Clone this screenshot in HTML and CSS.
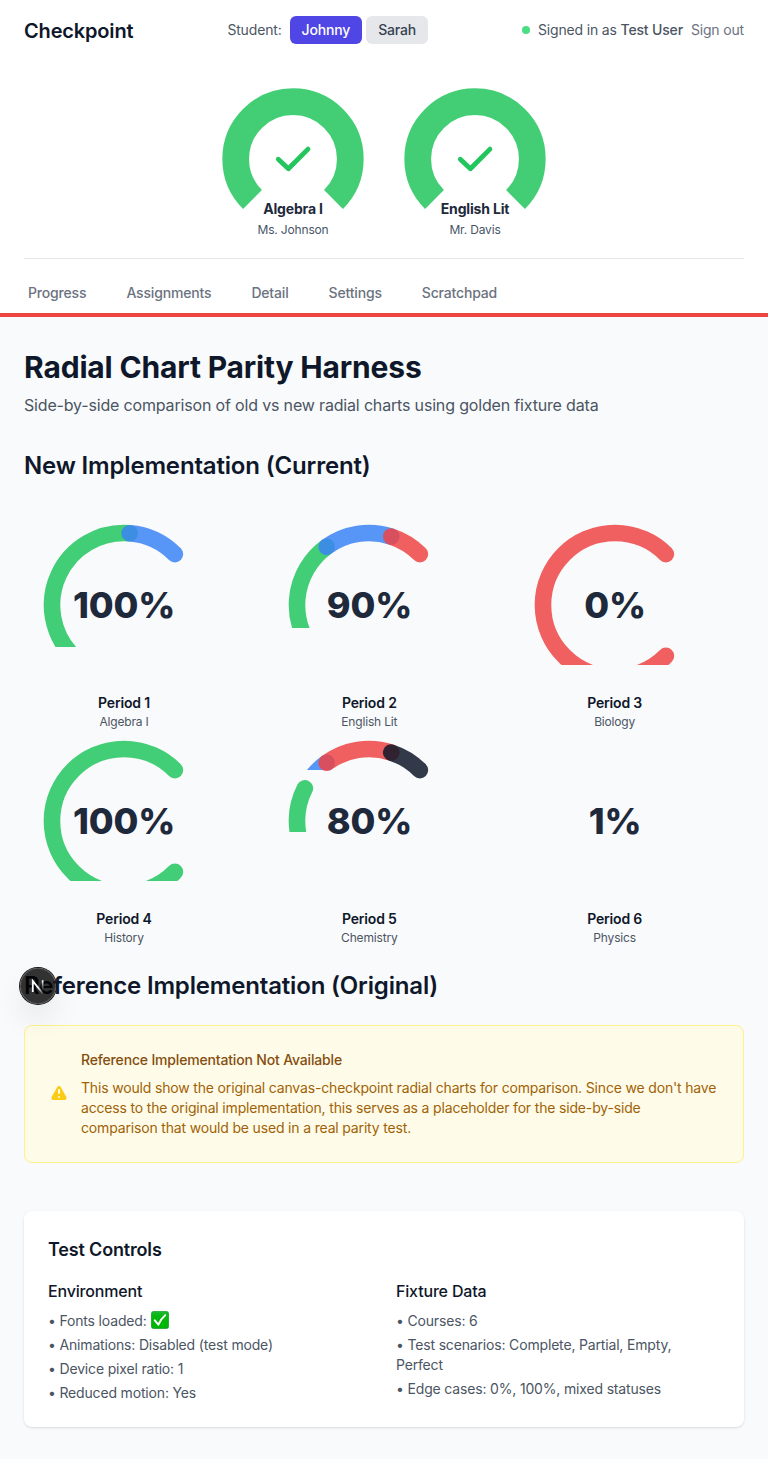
FILE: index.html
```html
<!DOCTYPE html>
<html lang="en">
<head>
<meta charset="utf-8">
<title>Checkpoint</title>
<link rel="stylesheet" href="styles.css">
</head>
<body>
<header class="header">
  <div class="topbar">
    <div class="brand">Checkpoint</div>
    <div class="students"><span class="label">Student:</span><button class="pill active">Johnny</button><button class="pill">Sarah</button></div>
    <div class="account"><span class="dot"></span><span>Signed in as <b>Test User</b></span><a class="signout">Sign out</a></div>
  </div>
  <div class="summary">
    <svg class="donut" viewBox="-71 -79 142 162">
      <path class="ring green" d="M-40.5 40.5A57.3 57.3 0 1 1 40.5 40.5"/>
      <path class="check" d="M-14.7 .2L-4.6 9.8L15 -9.9"/>
      <text class="course" y="55">Algebra I</text>
      <text class="teacher" y="75">Ms. Johnson</text>
    </svg>
    <svg class="donut" viewBox="-71 -79 142 162">
      <path class="ring green" d="M-40.5 40.5A57.3 57.3 0 1 1 40.5 40.5"/>
      <path class="check" d="M-14.7 .2L-4.6 9.8L15 -9.9"/>
      <text class="course" y="55">English Lit</text>
      <text class="teacher" y="75">Mr. Davis</text>
    </svg>
  </div>
  <nav class="nav"><a>Progress</a><a>Assignments</a><a>Detail</a><a>Settings</a><a>Scratchpad</a></nav>
</header>
<main class="main">
  <h1>Radial Chart Parity Harness</h1>
  <p class="lead">Side-by-side comparison of old vs new radial charts using golden fixture data</p>
  <h2>New Implementation (Current)</h2>
  <div class="charts">
    <div class="chart">
      <svg viewBox="-100 -84 200 168">
        <clipPath id="c1"><rect x="-100" y="-100" width="200" height="142"/></clipPath>
        <path class="arc green" clip-path="url(#c1)" d="M-50.9 50.9A72 72 0 0 1 5.65 -71.78"/>
        <path class="arc blue" d="M5.65 -71.78A72 72 0 0 1 50.9 -50.9"/>
        <text class="value" y="13">100%</text>
      </svg>
      <div class="name">Period 1</div><div class="subject">Algebra I</div>
    </div>
    <div class="chart">
      <svg viewBox="-100 -84 200 168">
        <clipPath id="c2"><rect x="-100" y="-100" width="200" height="123"/></clipPath>
        <path class="arc green" clip-path="url(#c2)" d="M-50.9 50.9A72 72 0 0 1 -42.32 -58.25"/>
        <path class="arc blue" d="M-42.32 -58.25A72 72 0 0 1 22.25 -68.48"/>
        <path class="arc red" d="M22.25 -68.48A72 72 0 0 1 50.9 -50.9"/>
        <text class="value" x=".4" y="13">90%</text>
      </svg>
      <div class="name">Period 2</div><div class="subject">English Lit</div>
    </div>
    <div class="chart">
      <svg viewBox="-100 -84 200 168">
        <clipPath id="c3"><rect x="-100" y="-100" width="200" height="160"/></clipPath>
        <path class="arc red" clip-path="url(#c3)" d="M50.9 50.9A72 72 0 1 1 50.9 -50.9"/>
        <text class="value" y="13">0%</text>
      </svg>
      <div class="name">Period 3</div><div class="subject">Biology</div>
    </div>
    <div class="chart">
      <svg viewBox="-100 -84 200 168">
        <path class="arc green" clip-path="url(#c3)" d="M50.9 50.9A72 72 0 1 1 50.9 -50.9"/>
        <text class="value" y="13">100%</text>
      </svg>
      <div class="name">Period 4</div><div class="subject">History</div>
    </div>
    <div class="chart">
      <svg viewBox="-100 -84 200 168">
        <clipPath id="c5"><rect x="-100" y="-100" width="200" height="111"/></clipPath>
        <clipPath id="c6"><rect x="-100" y="-100" width="200" height="49"/></clipPath>
        <path class="arc green" clip-path="url(#c5)" d="M-50.9 50.9A72 72 0 0 1 -64.15 -32.69"/>
        <path class="arc blue" clip-path="url(#c6)" d="M-64.15 -32.69A72 72 0 0 1 -42.32 -58.25"/>
        <path class="arc red" d="M-42.32 -58.25A72 72 0 0 1 22.25 -68.48"/>
        <path class="arc dark" d="M22.25 -68.48A72 72 0 0 1 50.9 -50.9"/>
        <text class="value" x=".4" y="13">80%</text>
      </svg>
      <div class="name">Period 5</div><div class="subject">Chemistry</div>
    </div>
    <div class="chart">
      <svg viewBox="-100 -84 200 168"><text class="value" y="13">1%</text></svg>
      <div class="name">Period 6</div><div class="subject">Physics</div>
    </div>
  </div>
  <div class="ref-heading">
    <h2>Reference Implementation (Original)</h2>
    <div class="badge">
      <svg viewBox="0 0 38 38">
        <defs>
          <linearGradient id="g1" gradientUnits="userSpaceOnUse" x1="20" y1="20" x2="25" y2="27"><stop stop-color="#fff"/><stop offset="1" stop-color="#fff" stop-opacity="0"/></linearGradient>
          <linearGradient id="g2" x1="0" y1="0" x2="0" y2="1"><stop stop-color="#fff"/><stop offset="1" stop-color="#fff" stop-opacity="0"/></linearGradient>
        </defs>
        <path d="M13.8 25V14L24 26.8" fill="none" stroke="url(#g1)" stroke-width="1.8"/>
        <rect x="22.8" y="13.2" width="1.7" height="11" fill="url(#g2)"/>
      </svg>
    </div>
  </div>
  <section class="notice">
    <svg viewBox="0 0 20 20"><path fill="#facc15" fill-rule="evenodd" d="M8.257 3.099c.765-1.36 2.722-1.36 3.486 0l5.58 9.92c.75 1.334-.213 2.98-1.742 2.98H4.42c-1.53 0-2.493-1.646-1.743-2.98l5.58-9.92zM11 13a1 1 0 11-2 0 1 1 0 012 0zm-1-8a1 1 0 00-1 1v3a1 1 0 002 0V6a1 1 0 00-1-1z" clip-rule="evenodd"/></svg>
    <div>
      <h3>Reference Implementation Not Available</h3>
      <p>This would show the original canvas-checkpoint radial charts for comparison. Since we don't have access to the original implementation, this serves as a placeholder for the side-by-side comparison that would be used in a real parity test.</p>
    </div>
  </section>
  <section class="controls">
    <h3>Test Controls</h3>
    <div class="columns">
      <div>
        <h4>Environment</h4>
        <ul>
          <li>• Fonts loaded: <svg class="tick" viewBox="0 0 18 18"><defs><linearGradient id="g3" x1="0" y1="0" x2="0" y2="1"><stop stop-color="#20b838"/><stop offset=".25" stop-color="#05b90f"/><stop offset="1" stop-color="#00b500"/></linearGradient></defs><rect x=".4" y=".4" width="17.2" height="17.2" rx="2.5" fill="url(#g3)" stroke="#149b24" stroke-width=".8"/><path d="M3.8 9.3L7.4 13.7Q9.5 8.2 14.2 4.2" fill="none" stroke="#fff" stroke-width="1.9" stroke-linecap="round" stroke-linejoin="round"/></svg></li>
          <li>• Animations: Disabled (test mode)</li>
          <li>• Device pixel ratio: 1</li>
          <li>• Reduced motion: Yes</li>
        </ul>
      </div>
      <div>
        <h4>Fixture Data</h4>
        <ul>
          <li>• Courses: 6</li>
          <li>• Test scenarios: Complete, Partial, Empty, Perfect</li>
          <li>• Edge cases: 0%, 100%, mixed statuses</li>
        </ul>
      </div>
    </div>
  </section>
</main>
</body>
</html>
```
FILE: styles.css
```css
* { box-sizing: border-box; margin: 0; padding: 0; }
body { font-family: Inter, sans-serif; font-size: 14px; line-height: 20px; letter-spacing: -.168px; background: #f9fafb; color: #0f172a; }
svg { display: block; }
.header { background: #fff; height: 317px; border-bottom: 4px solid #ef4444; padding: 16px 24px 0; }
.topbar { display: flex; justify-content: space-between; align-items: center; height: 28px; }
.brand { font-size: 20px; line-height: 28px; font-weight: 600; padding-top: 2px; }
.students { display: flex; align-items: center; gap: 4px; }
.label { color: #4b5563; margin-right: 4px; }
.pill { font: 500 14px/20px Inter, sans-serif; letter-spacing: inherit; border: 0; border-radius: 6px; padding: 4px 12px; background: #e5e7eb; color: #374151; }
.pill.active { background: #4f46e5; color: #fff; }
.account { display: flex; align-items: center; gap: 8px; color: #4b5563; }
.account b { font-weight: 500; }
.dot { width: 8px; height: 8px; border-radius: 50%; background: #4ade80; }
.signout { color: #6b7280; }
.summary { display: flex; justify-content: center; gap: 40px; padding: 36px 0 16px; }
.donut { width: 142px; height: 162px; }
.ring { fill: none; stroke-width: 26.7; opacity: .85; }
.check { fill: none; stroke: #22c55e; stroke-width: 4.8; stroke-linecap: round; stroke-linejoin: round; }
text { text-anchor: middle; }
.course { font-size: 14px; font-weight: 700; fill: #1e293b; }
.teacher { font-size: 12px; fill: #475569; }
.nav { display: flex; gap: 40px; border-top: 1px solid #e5e7eb; padding: 24px 4px 0; font-weight: 500; color: #6b7280; }
.main { padding: 32px 24px; }
h1 { font-size: 30px; line-height: 36px; font-weight: 700; }
.lead { font-size: 16px; line-height: 24px; color: #4b5563; margin: 8px 0 32px; }
h2 { font-size: 24px; line-height: 32px; font-weight: 600; padding-top: 1px; }
.charts { display: grid; grid-template-columns: repeat(3, 1fr); gap: 7px 16px; padding: 39px 0 23px; }
.chart { width: 200px; text-align: center; }
.chart svg { width: 200px; height: 168px; margin-bottom: 4px; }
.arc { fill: none; stroke-width: 16.6; stroke-linecap: round; opacity: .85; }
.green { stroke: #22c55e; }
.blue { stroke: #3b82f6; }
.red { stroke: #ef4444; }
.dark { stroke: #0f172a; }
.value { font-size: 36px; font-weight: 800; fill: #1e293b; }
.name { font-weight: 600; }
.subject { font-size: 12px; line-height: 16px; padding-top: 1px; color: #4b5563; }
.ref-heading { position: relative; }
.badge { position: absolute; left: -4px; top: -1px; width: 36px; height: 36px; border-radius: 50%; background: rgba(0,0,0,.8); box-shadow: 0 0 0 1px #171717, inset 0 0 0 1px rgba(255,255,255,.14), 0 16px 32px -8px rgba(0,0,0,.24); }
.badge svg { width: 38px; height: 38px; margin: -1px; }
.notice { display: flex; align-items: center; gap: 12px; margin: 23px 0 48px; padding: 24px; border: 1px solid #fef08a; border-radius: 8px; background: #fefce8; color: #a16207; }
.notice svg { width: 20px; height: 20px; flex: none; }
.notice h3 { font-size: 14px; font-weight: 500; color: #854d0e; margin-bottom: 8px; }
.controls { background: #fff; border-radius: 8px; padding: 24px; box-shadow: 0 1px 3px rgba(0,0,0,.1), 0 1px 2px -1px rgba(0,0,0,.1); }
.controls h3 { font-size: 18px; line-height: 28px; font-weight: 600; padding-top: 1px; margin-bottom: 15px; }
.columns { display: grid; grid-template-columns: 1fr 1fr; gap: 24px; }
h4 { font-size: 16px; line-height: 24px; font-weight: 500; margin-bottom: 8px; }
ul { list-style: none; display: grid; gap: 4px; color: #4b5563; }
li { min-height: 20px; }
.tick { display: inline-block; width: 18px; height: 18px; vertical-align: -2px; margin: -4px 0 -1px 1px; }
```
